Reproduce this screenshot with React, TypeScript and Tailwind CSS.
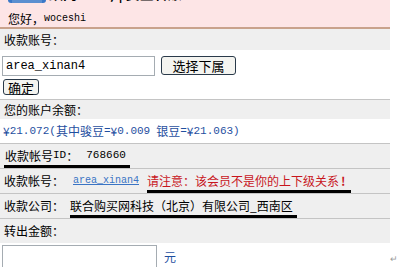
import React from "react"

const cjk = "font-['SimSun','Noto_Sans_CJK_SC',sans-serif]"

function M({ children, className = "" }: { children: React.ReactNode; className?: string }) {
  return <span className={`font-['Liberation_Mono','Noto_Sans_CJK_SC',monospace] ${className}`}>{children}</span>
}

function GreyRow({ children, className = "" }: { children: React.ReactNode; className?: string }) {
  return (
    <div className={`flex items-center border-t border-[#c4c4c4] bg-[#efefef] px-[4px] ${className}`}>
      {children}
    </div>
  )
}

export default function App() {
  return (
    <div className={`relative h-[267px] w-[398px] overflow-hidden bg-white text-[12px] leading-none text-black ${cjk}`}>
      <div className="w-[390px]">
        {/* header, title is scrolled off the top */}
        <div className="h-[29px] overflow-hidden border-b-2 border-[#c9a28c] bg-[#fde5e6]">
          <div className="-mt-[14px] flex h-[14px] items-end gap-[3px] pl-[8px]">
            <svg width="38" height="18" viewBox="0 0 38 18" className="-mb-[4px]">
              <rect x="0" y="2" width="38" height="15" rx="3" fill="#3a78c8" />
              <rect x="14" y="5" width="20" height="8" rx="2" fill="#8fb8e6" />
              <rect x="4" y="14" width="30" height="3" fill="#5b8fd0" />
            </svg>
            <span className="text-[14px] font-bold">跃网3000) | 资金转账</span>
          </div>
          <div className="mt-[13px] flex items-center pl-[8px]">
            <span>您好，</span>
            <M className="text-[10px]">woceshi</M>
          </div>
        </div>

        <div className="flex h-[21px] items-center bg-[#efefef] px-[4px]">收款账号：</div>

        <div className="flex h-[28px] items-center gap-[6px] px-[2px] pt-[3px]">
          <div className="flex h-[20px] w-[153px] items-center border border-[#a5acb2] bg-white px-[3px]">
            <M className="text-[12px]">area_xinan4</M>
          </div>
          <button className="flex h-[19px] w-[75px] items-center justify-center rounded-[3px] border border-[#2a3a4a] bg-[#f4f4f0] text-[13px]">
            选择下属
          </button>
        </div>
        <div className="px-[3px] pt-[1px]">
          <button className="flex h-[16px] w-[36px] items-center justify-center rounded-[3px] border border-[#2a3a4a] bg-[#f4f4f0] text-[13px]">
            确定
          </button>
        </div>

        <GreyRow className="mt-[4px] h-[20px]">您的账户余额：</GreyRow>
        <div className="flex h-[24px] items-center px-[3px] text-[#1f4f9f]">
          <span>¥</span>
          <M className="text-[11px]">21.072(</M>
          <span>其中骏豆</span>
          <M className="text-[11px]">=</M>
          <span>¥</span>
          <M className="text-[11px]">0.009</M>
          <span className="ml-[6px]">银豆</span>
          <M className="text-[11px]">=</M>
          <span>¥</span>
          <M className="text-[11px]">21.063)</M>
        </div>

        <GreyRow className="h-[25px]">
          <span className="mt-[5px] flex items-center border-b-[3px] border-black pb-[3px] pl-[1px] pr-[4px]">
            <span>收款帐号</span>
            <M className="text-[11px]">ID</M>
            <span>：</span>
            <M className="ml-[8px] text-[11px]">768660</M>
          </span>
        </GreyRow>

        <GreyRow className="h-[25px]">
          <span className="w-[69px]">收款帐号：</span>
          <M className="text-[10px] text-[#3a74c4] underline">area_xinan4</M>
          <span className="ml-[8px] mt-[5px] border-b-[3px] border-black pb-[3px] pr-[6px] text-[#c8161d]">
            请注意：该会员不是你的上下级关系<span className="ml-[2px] font-bold">!</span>
          </span>
        </GreyRow>

        <GreyRow className="h-[25px]">
          <span className="w-[66px]">收款公司：</span>
          <span className="mt-[5px] border-b-[3px] border-black pb-[3px] pr-[4px]">联合购买网科技（北京）有限公司_西南区</span>
        </GreyRow>

        <GreyRow className="h-[25px]">转出金额：</GreyRow>

        <div className="flex items-start gap-[7px] px-[2px] pt-[2px]">
          <div className="h-[30px] w-[155px] border border-[#a5acb2] bg-white" />
          <span className="pt-[6px] text-[#1f4f9f]">元</span>
        </div>
      </div>
      <span className="absolute left-[390px] top-[254px] text-[9px] text-[#9a9a9a]">↵</span>
    </div>
  )
}
